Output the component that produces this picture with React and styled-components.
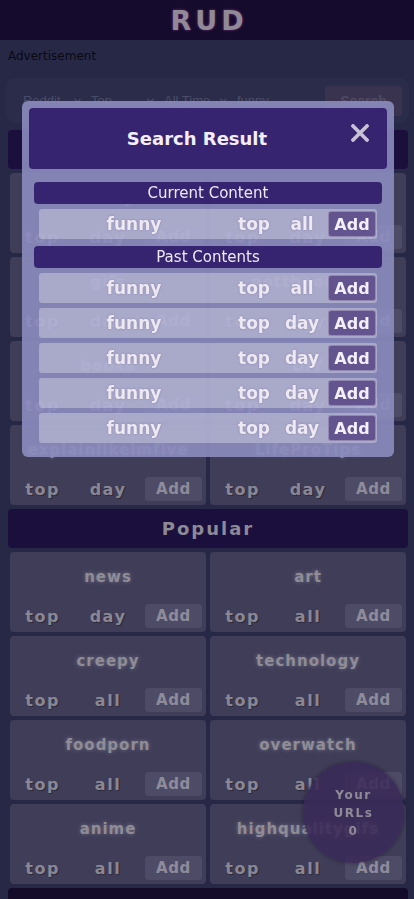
import styled, { createGlobalStyle } from "styled-components"
import { ChevronDown } from "lucide-react"

const GlobalStyle = createGlobalStyle`
    html, body {
        margin: 0;
        padding: 0;
        background: #272846;
        font-family: "DejaVu Sans", Verdana, sans-serif;
    }
    * { box-sizing: border-box; }
`

const Header = styled.header`
    height: 40px;
    background: #150b2c;
    display: flex;
    align-items: center;
    justify-content: center;
`
const Logo = styled.h1`
    margin: 0;
    font-size: 27px;
    font-weight: bold;
    letter-spacing: 4px;
    padding-left: 4px;
    color: #8f8a96;
    text-shadow: 0 0 3px rgba(170, 70, 170, 0.6);
`
const Ad = styled.div`
    height: 38px;
    padding: 9px 8px 0;
    font-size: 12px;
    color: #0a0a14;
`
const SearchBar = styled.div`
    margin: 0 5px 0 6px;
    height: 45px;
    border-radius: 10px;
    background: #2b2c4a;
    display: flex;
    align-items: center;
    padding: 0 7px 0 17px;
    font-family: "Liberation Sans", Arial, sans-serif;
    font-size: 13px;
    color: #4b4c6b;
`
const Select = styled.div`
    width: ${(p) => p.w}px;
    display: flex;
    align-items: center;
    justify-content: space-between;
    padding-right: 8px;
`
const Query = styled.div`
    flex: 1;
`
const SearchButton = styled.div`
    width: 77px;
    height: 30px;
    background: #3a3350;
    border-radius: 2px;
    display: flex;
    align-items: center;
    justify-content: center;
    font-weight: bold;
    font-size: 14px;
    color: #4e4a62;
`

const Main = styled.main`
    padding: 7px 6px 0 8px;
    display: flex;
    flex-direction: column;
    gap: 4px;
`
const SectionBar = styled.h2`
    margin: 0;
    height: 39px;
    border-radius: 4px;
    background: ${(p) => p.bg || "#1b0f3d"};
    display: flex;
    align-items: center;
    justify-content: center;
    font-size: 18px;
    font-weight: bold;
    letter-spacing: 2px;
    color: #8d8a95;
`
const Grid = styled.div`
    display: grid;
    grid-template-columns: 1fr 1fr;
    gap: 4px;
    padding: 0 2px;
`
const Card = styled.div`
    height: 80px;
    background: #3f3d58;
    border-radius: 4px;
    display: flex;
    flex-direction: column;
    justify-content: space-between;
    padding: 14px 0 4px;
`
const SubName = styled.div`
    text-align: center;
    font-size: 15px;
    line-height: 22px;
    font-weight: bold;
    letter-spacing: 1px;
    color: #8f8c96;
    text-shadow: 0 0 4px rgba(190, 190, 200, 0.4);
`
const CardRow = styled.div`
    display: grid;
    grid-template-columns: 1fr 1fr 1fr;
    align-items: center;
    height: 24px;
`
const Opt = styled.span`
    text-align: center;
    font-size: 16px;
    font-weight: bold;
    letter-spacing: 1.5px;
    color: #8a8794;
    text-shadow: 1px 1px 1px rgba(0, 0, 0, 0.3);
`
const AddButton = styled.button`
    justify-self: center;
    width: 57px;
    height: 24px;
    border: none;
    border-radius: 3px;
    background: #4d4b66;
    color: #8e8c9a;
    font-family: inherit;
    font-size: 15px;
    font-weight: bold;
    letter-spacing: 0.5px;
    padding: 0;
`

const Modal = styled.div`
    position: fixed;
    top: 101px;
    left: 22px;
    width: 372px;
    padding: 7px 7px 14px;
    border-radius: 6px;
    background: rgba(140, 140, 191, 0.9);
`
const ModalHeader = styled.div`
    height: 61px;
    border-radius: 4px;
    background: #372470;
    display: flex;
    align-items: center;
    gap: 4px;
    padding: 0 18px;
`
const ModalTitle = styled.h3`
    flex: 1;
    margin: 0;
    text-align: center;
    font-size: 18px;
    font-weight: bold;
    color: #f4eefb;
`
const Close = styled.div`
    align-self: flex-start;
    margin-top: 16px;
    width: 18px;
    height: 18px;
    display: flex;
`
const ModalBody = styled.div`
    padding: 13px 5px 0;
    display: flex;
    flex-direction: column;
    gap: 5px;
`
const ListBar = styled.div`
    height: 22px;
    line-height: 22px;
    border-radius: 4px;
    background: #372470;
    text-align: center;
    font-size: 15px;
    color: #eee8f8;
    margin-top: ${(p) => p.mt || 0}px;
`
const ResultRow = styled.div`
    margin: 0 5px;
    height: 30px;
    border-radius: 3px;
    background: rgba(255, 255, 255, 0.3);
    display: grid;
    grid-template-columns: 190px 50px 46px 1fr;
    align-items: center;
    font-size: 17px;
    font-weight: bold;
    color: #eee8f2;
    text-shadow: 0 0 2px rgba(60, 50, 90, 0.35);
`
const Cell = styled.span`
    text-align: center;
`
const ResultAdd = styled.button`
    justify-self: end;
    margin-right: 1px;
    width: 48px;
    height: 26px;
    border: 1px solid rgba(255, 255, 255, 0.3);
    border-radius: 3px;
    background: #63538e;
    color: #f3eff8;
    font-family: inherit;
    font-size: 16px;
    font-weight: bold;
    padding: 0;
`

const Bubble = styled.div`
    position: fixed;
    left: 303px;
    top: 762px;
    width: 101px;
    height: 101px;
    border-radius: 50%;
    background: rgba(58, 42, 88, 0.88);
    box-shadow: 0 0 4px rgba(0, 0, 0, 0.35);
    display: flex;
    flex-direction: column;
    align-items: center;
    justify-content: center;
    font-size: 12px;
    line-height: 18px;
    font-weight: bold;
    letter-spacing: 1.5px;
    color: #8f8b96;
`

const recent = [
    ["funny", "AskReddit"],
    ["gifs", "nottheonion"],
    ["books", "DIY"],
    ["explainlikeimfive", "LifeProTips"],
]
const popular = [
    [["news", "day"], ["art", "all"]],
    [["creepy", "all"], ["technology", "all"]],
    [["foodporn", "all"], ["overwatch", "all"]],
    [["anime", "all"], ["highqualitygifs", "all"]],
]
const past = ["all", "day", "day", "day", "day"]

const SubCard = ({ name, time }) => (
    <Card>
        <SubName>{name}</SubName>
        <CardRow>
            <Opt>top</Opt>
            <Opt>{time}</Opt>
            <AddButton>Add</AddButton>
        </CardRow>
    </Card>
)

const Result = ({ time }) => (
    <ResultRow>
        <Cell>funny</Cell>
        <Cell>top</Cell>
        <Cell>{time}</Cell>
        <ResultAdd>Add</ResultAdd>
    </ResultRow>
)

const App = () => {
  return (
    <>
        <GlobalStyle />
        <Header>
            <Logo>RUD</Logo>
        </Header>
        <Ad>Advertisement</Ad>
        <SearchBar>
            <Select w={68}>Reddit <ChevronDown size={11} strokeWidth={3} /></Select>
            <Select w={73}>Top <ChevronDown size={11} strokeWidth={3} /></Select>
            <Select w={73}>All Time <ChevronDown size={11} strokeWidth={3} /></Select>
            <Query>funny</Query>
            <SearchButton>Search</SearchButton>
        </SearchBar>

        <Main>
            <SectionBar>Recent</SectionBar>
            <Grid>
                {recent.flat().map((n, i) => (
                    <SubCard key={i} name={n} time="day" />
                ))}
            </Grid>
            <SectionBar>Popular</SectionBar>
            <Grid>
                {popular.flat().map(([n, t], i) => (
                    <SubCard key={i} name={n} time={t} />
                ))}
            </Grid>
            {/* next section starts just below the fold */}
            <SectionBar bg="#140c28" />
        </Main>

        <Modal>
            <ModalHeader>
                <ModalTitle>Search Result</ModalTitle>
                <Close>
                    <svg width="18" height="18" viewBox="0 0 18 18">
                        <path d="M2 2 L16 16 M16 2 L2 16" stroke="#c9c2d6" strokeWidth="3.6" strokeLinecap="square" />
                    </svg>
                </Close>
            </ModalHeader>
            <ModalBody>
                <ListBar>Current Content</ListBar>
                <Result time="all" />
                <ListBar mt={2}>Past Contents</ListBar>
                {past.map((t, i) => (
                    <Result key={i} time={t} />
                ))}
            </ModalBody>
        </Modal>

        <Bubble>
            <span>Your</span>
            <span>URLs</span>
            <span>0</span>
        </Bubble>
    </>
  )
}

export default App
